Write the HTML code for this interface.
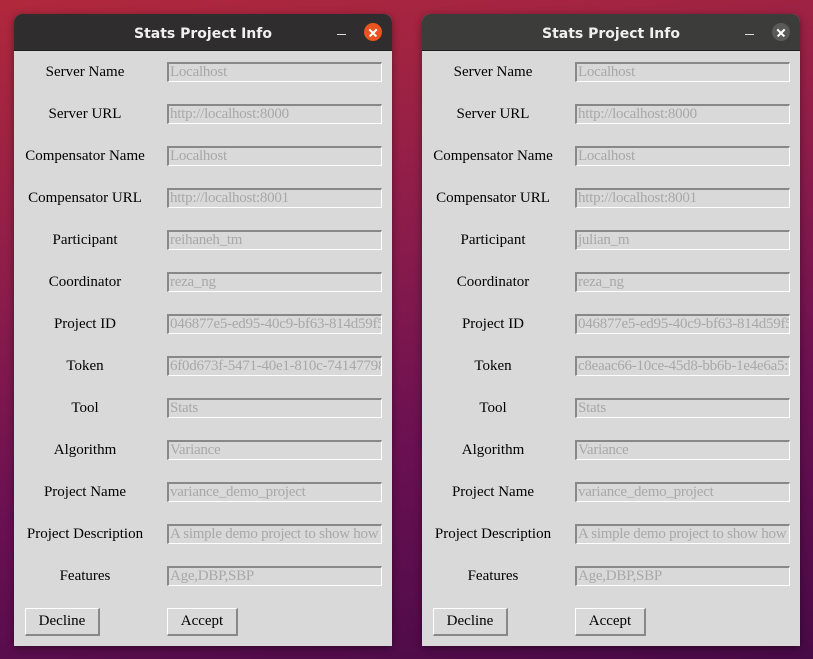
<!DOCTYPE html>
<html><head><meta charset="utf-8"><style>
body{margin:0;width:813px;height:659px;overflow:hidden;position:relative;
background:linear-gradient(170deg,#b0283c 0%,#8e1d4a 35%,#6a1052 65%,#470a46 100%);
font-family:"Liberation Serif",serif;}
.win{position:absolute;top:14px;width:378px;height:632px;background:#d9d9d9;border-radius:8px 8px 0 0;box-shadow:0 2px 8px rgba(0,0,0,.4);overflow:hidden}
.tb{position:absolute;left:0;top:0;width:100%;height:36px;background:#2f2d2d;border-bottom:1px solid #1e1e1e;color:#f0f0f0;font-family:"DejaVu Sans","Liberation Sans",sans-serif;font-weight:bold;font-size:14px;line-height:40px;text-align:center}
.w2 .tb{background:#3c3c3a}
.min{position:absolute;right:46px;top:20px;width:9px;height:1px;background:#ddd}
.cls{position:absolute;right:10px;top:9px;width:18px;height:18px;border-radius:50%;background:#e95420}
.w2 .cls{background:#5a5a58}
.cls:before,.cls:after{content:"";position:absolute;left:4px;top:8.5px;width:10px;height:1.5px;background:#fff;transform:rotate(45deg)}
.cls:after{transform:rotate(-45deg)}
.l{position:absolute;left:0;width:142px;text-align:center;font-size:15px;color:#000;height:20px;line-height:20px;margin-top:2px}
.e{position:absolute;left:153px;width:211px;height:17px;border-top:2px solid #888;border-left:2px solid #888;border-bottom:1px solid #fff;border-right:1px solid #fff;font-size:15px;letter-spacing:-0.25px;color:#a8a8a8;line-height:16px;padding-left:1px;white-space:nowrap;overflow:hidden}
.b{position:absolute;top:594px;height:25px;border-top:1px solid #fff;border-left:1px solid #fff;border-bottom:2px solid #888;border-right:2px solid #888;font-size:15px;text-align:center;line-height:24px;color:#000}
</style></head><body>
<div class="win" style="left:14px">
<div class="tb">Stats Project Info<div class="min"></div><div class="cls"></div></div>
<div class="l" style="top:46px">Server Name</div><div class="e" style="top:48px">Localhost</div>
<div class="l" style="top:88px">Server URL</div><div class="e" style="top:90px">http://localhost:8000</div>
<div class="l" style="top:130px">Compensator Name</div><div class="e" style="top:132px">Localhost</div>
<div class="l" style="top:172px">Compensator URL</div><div class="e" style="top:174px">http://localhost:8001</div>
<div class="l" style="top:214px">Participant</div><div class="e" style="top:216px">reihaneh_tm</div>
<div class="l" style="top:256px">Coordinator</div><div class="e" style="top:258px">reza_ng</div>
<div class="l" style="top:298px">Project ID</div><div class="e" style="top:300px">046877e5-ed95-40c9-bf63-814d59f5</div>
<div class="l" style="top:340px">Token</div><div class="e" style="top:342px">6f0d673f-5471-40e1-810c-74147798</div>
<div class="l" style="top:382px">Tool</div><div class="e" style="top:384px">Stats</div>
<div class="l" style="top:424px">Algorithm</div><div class="e" style="top:426px">Variance</div>
<div class="l" style="top:466px">Project Name</div><div class="e" style="top:468px">variance_demo_project</div>
<div class="l" style="top:508px">Project Description</div><div class="e" style="top:510px">A simple demo project to show how</div>
<div class="l" style="top:550px">Features</div><div class="e" style="top:552px">Age,DBP,SBP</div>
<div class="b" style="left:11px;width:72px">Decline</div>
<div class="b" style="left:153px;width:68px">Accept</div>
</div>
<div class="win w2" style="left:422px">
<div class="tb">Stats Project Info<div class="min"></div><div class="cls"></div></div>
<div class="l" style="top:46px">Server Name</div><div class="e" style="top:48px">Localhost</div>
<div class="l" style="top:88px">Server URL</div><div class="e" style="top:90px">http://localhost:8000</div>
<div class="l" style="top:130px">Compensator Name</div><div class="e" style="top:132px">Localhost</div>
<div class="l" style="top:172px">Compensator URL</div><div class="e" style="top:174px">http://localhost:8001</div>
<div class="l" style="top:214px">Participant</div><div class="e" style="top:216px">julian_m</div>
<div class="l" style="top:256px">Coordinator</div><div class="e" style="top:258px">reza_ng</div>
<div class="l" style="top:298px">Project ID</div><div class="e" style="top:300px">046877e5-ed95-40c9-bf63-814d59f5</div>
<div class="l" style="top:340px">Token</div><div class="e" style="top:342px">c8eaac66-10ce-45d8-bb6b-1e4e6a5:</div>
<div class="l" style="top:382px">Tool</div><div class="e" style="top:384px">Stats</div>
<div class="l" style="top:424px">Algorithm</div><div class="e" style="top:426px">Variance</div>
<div class="l" style="top:466px">Project Name</div><div class="e" style="top:468px">variance_demo_project</div>
<div class="l" style="top:508px">Project Description</div><div class="e" style="top:510px">A simple demo project to show how</div>
<div class="l" style="top:550px">Features</div><div class="e" style="top:552px">Age,DBP,SBP</div>
<div class="b" style="left:11px;width:72px">Decline</div>
<div class="b" style="left:153px;width:68px">Accept</div>
</div>
</body></html>
